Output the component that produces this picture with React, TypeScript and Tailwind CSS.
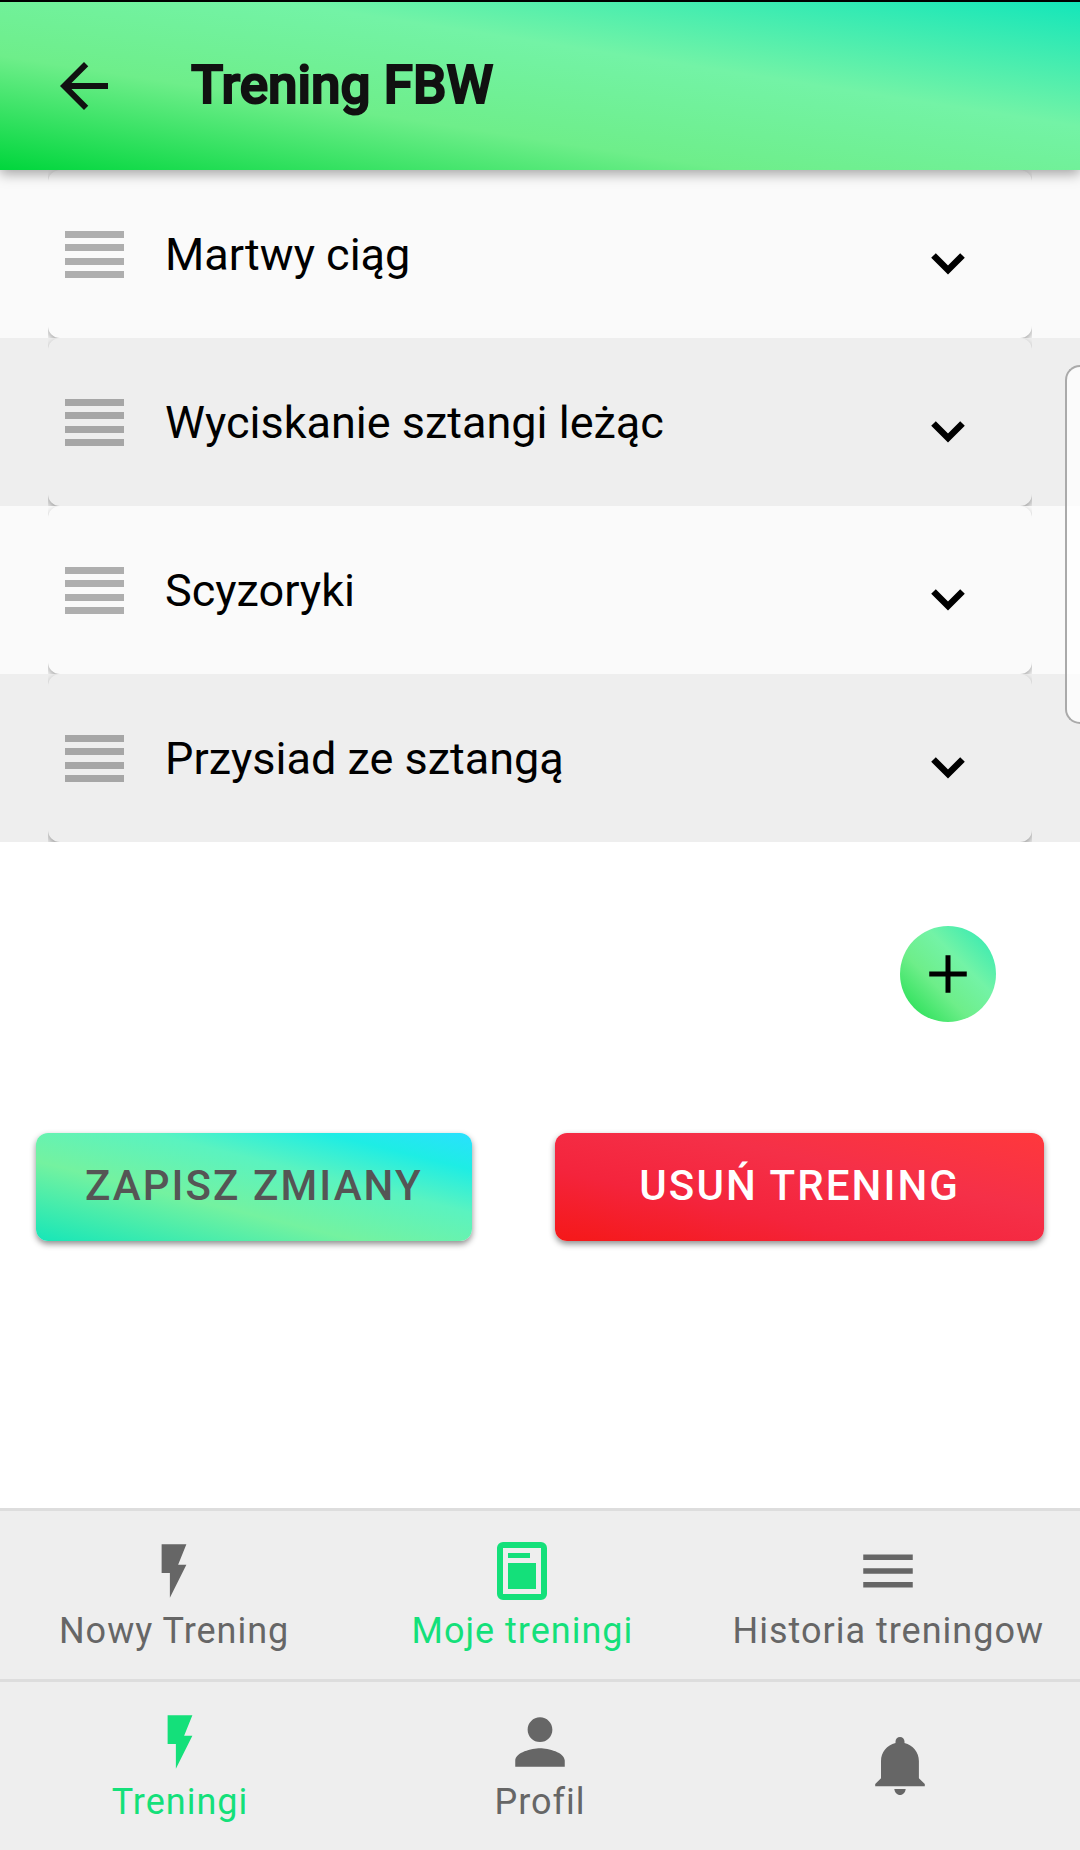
import React from "react";
import { IoMdAdd, IoMdFlash, IoMdMenu, IoMdPerson } from "react-icons/io";

const exercises = ["Martwy ciąg", "Wyciskanie sztangi leżąc", "Scyzoryki", "Przysiad ze sztangą"];

function BackArrow() {
  return (
    <svg viewBox="0 0 24 24" className="size-[72px]" fill="currentColor" aria-hidden="true">
      <path d="M20 11H7.83l5.59-5.59L12 4l-8 8 8 8 1.41-1.41L7.83 13H20v-2z" />
    </svg>
  );
}

function DragHandle() {
  return (
    <svg viewBox="0 0 59 47" className="h-[47px] w-[59px]" fill="#000" fillOpacity="0.3" aria-hidden="true">
      <path d="M0 0h59v7H0zM0 13h59v7H0zM0 27h59v7H0zM0 40h59v7H0z" />
    </svg>
  );
}

function Chevron() {
  return (
    <svg viewBox="0 0 34 22" className="h-[22px] w-[34px]" fill="none" stroke="#000" strokeWidth="6.5" aria-hidden="true">
      <path d="M2.5 2.5 17 17 31.500 2.500" />
    </svg>
  );
}

function Journal() {
  return (
    <svg viewBox="0 0 66 66" className="size-[66px]" aria-hidden="true">
      <rect x="11" y="7" width="44" height="52" rx="3" fill="none" stroke="currentColor" strokeWidth="6" />
      <path fill="currentColor" d="M19 15h22v5H19zM19 25h28v26H19z" />
    </svg>
  );
}

function Bell() {
  return (
    <svg viewBox="0 0 66 66" className="size-[66px]" fill="currentColor" aria-hidden="true">
      <path d="M27.300 56h11.400c-.4 3.600-2.800 6-5.700 6s-5.300-2.400-5.700-6z" />
      <path d="M51.900 45.300V28c0-9-6-16-14.400-18V8.500C37.500 6 35.500 4 33 4s-4.500 2-4.500 4.500V10C20 12 14 19 14 28v17.300L8.200 51v2.300h49.600V51z" />
    </svg>
  );
}

function ExerciseRow({ name }: { name: string }) {
  return (
    <li className="bg-[#fafafa] px-12 even:bg-[#eeeeee]">
      <div className="overflow-hidden">
        <div className="flex h-[168px] items-center rounded-[12px] bg-inherit pr-[67px] pl-[17px] shadow-[0_3px_6px_rgba(0,0,0,0.35)]">
          <button type="button" aria-label="Przesuń">
            <DragHandle />
          </button>
          <span className="ml-[41px] flex-1 pt-0.5 text-[45px] leading-[54px]">{name}</span>
          <button type="button" aria-label="Rozwiń" className="pt-5">
            <Chevron />
          </button>
        </div>
      </div>
    </li>
  );
}

function Tab({ icon, label, active }: { icon: React.ReactNode; label: string; active?: boolean }) {
  return (
    <a
      href="#"
      className={
        "flex flex-1 flex-col items-center px-9 pt-[27px] text-[36px] leading-[42px] tracking-[1px] whitespace-nowrap " +
        (active ? "text-[#14e07a]" : "text-[#666666]")
      }
    >
      {icon}
      <span className="mt-1.5">{label}</span>
    </a>
  );
}

export default function App() {
  return (
    <div className="relative flex min-h-screen flex-col bg-white font-[Roboto,sans-serif] text-black">
      <header className="relative z-10 flex h-[170px] items-center gap-[71px] border-t-2 border-black bg-[linear-gradient(to_top_right,#00d63c,#6eee8a_34%,#73f3a6_63%,#14e6ba)] px-12 text-[#111111] shadow-[0_4px_12px_rgba(0,0,0,0.35)]">
        <button type="button" aria-label="Wstecz">
          <BackArrow />
        </button>
        <h1 className="pb-0.5 text-[53px] leading-[64px] font-medium [-webkit-text-stroke:2px_#111111]">Trening FBW</h1>
      </header>

      <main className="flex flex-1 flex-col">
        <ul>
          {exercises.map((name) => (
            <ExerciseRow key={name} name={name} />
          ))}
        </ul>

        <div className="flex justify-end px-[84px] pt-[84px]">
          <button
            type="button"
            aria-label="Dodaj ćwiczenie"
            className="flex size-24 items-center justify-center rounded-full bg-[linear-gradient(to_top_right,#16dc4a,#6eee8a_38%,#73f3a6_63%,#28e8b6)]"
          >
            <IoMdAdd size={60} />
          </button>
        </div>

        <div className="mt-[111px] flex justify-between px-9 text-[42px] font-medium tracking-wider">
          <button
            type="button"
            className="h-[108px] rounded-[12px] bg-[linear-gradient(to_top_right,#16e6b8,#74f2a0_37%,#5af3c0_63%,#1eede4_83%,#2ae0ff)] px-[49px] pb-1 text-[#555555] shadow-[0_3px_6px_rgba(0,0,0,0.45)]"
          >
            ZAPISZ ZMIANY
          </button>
          <button
            type="button"
            className="h-[108px] rounded-[12px] bg-[linear-gradient(to_top_right,#f51818,#f4243c_33%,#f53048_64%,#ff383c)] px-[84px] pb-1 text-white shadow-[0_3px_6px_rgba(0,0,0,0.45)]"
          >
            USUŃ TRENING
          </button>
        </div>
      </main>

      <nav aria-label="Treningi" className="flex h-[171px] border-t-3 border-[#dddddd] bg-[#eeeeee]">
        <Tab icon={<IoMdFlash size={66} />} label="Nowy Trening" />
        <Tab icon={<Journal />} label="Moje treningi" active />
        <Tab icon={<IoMdMenu size={66} />} label="Historia treningow" />
      </nav>
      <nav aria-label="Menu główne" className="flex h-[171px] border-t-3 border-[#dddddd] bg-[#eeeeee]">
        <Tab icon={<IoMdFlash size={66} />} label="Treningi" active />
        <Tab icon={<IoMdPerson size={66} />} label="Profil" />
        <a href="#" aria-label="Powiadomienia" className="flex flex-1 items-center justify-center px-9 text-[#666666]">
          <Bell />
        </a>
      </nav>

      <div className="absolute top-[365px] right-0 h-[359px] w-[15px] rounded-l-[18px] border-2 border-r-0 border-[#aaaaaa] bg-white/75" />
    </div>
  );
}
